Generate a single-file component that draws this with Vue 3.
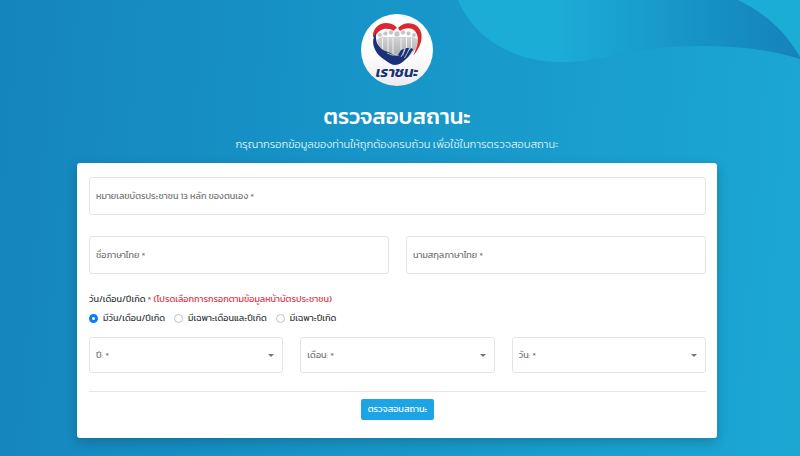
<template>
    <div class="page">
        <svg class="wave" viewBox="0 0 342 64" aria-hidden="true">
            <defs>
                <linearGradient id="wave-fill" x1="0" y1="0" x2="1" y2="0">
                    <stop offset="0.28" stop-color="#1cadd6" />
                    <stop offset="0.82" stop-color="#158cc2" />
                    <stop offset="1" stop-color="#1583bb" />
                </linearGradient>
            </defs>
            <path d="M0 0C13 32 48 62 106 62C150 62 170 46 242 46C285 46 318 51 342 59V0Z" fill="url(#wave-fill)" />
            <path d="M280 0C308 14 326 30 342 57V0Z" fill="#1cadd6" />
        </svg>

        <div class="content">
            <svg class="logo" viewBox="0 0 72 72" role="img" aria-label="เราชนะ">
                <defs>
                    <linearGradient id="logo-bg" x1="0" y1="0" x2="0" y2="1">
                        <stop offset="0.5" stop-color="#ffffff" />
                        <stop offset="1" stop-color="#ececee" />
                    </linearGradient>
                    <linearGradient id="logo-people" x1="0" y1="0" x2="0" y2="1">
                        <stop offset="0" stop-color="#d4d4d6" />
                        <stop offset="1" stop-color="#a9aaad" />
                    </linearGradient>
                </defs>
                <circle cx="36" cy="36" r="36" fill="url(#logo-bg)" />
                <path d="M16 26Q18 23 22 23H51Q55 23 57 26L55 35L47 43H27L18 35Z" fill="url(#logo-people)" />
                <g fill="#c4c4c7" stroke="#f8f8f8" stroke-width="0.6">
                    <circle cx="19" cy="21" r="2.2" />
                    <circle cx="24.500" cy="19.500" r="2.3" />
                    <circle cx="30" cy="18.500" r="2.4" />
                    <circle cx="42" cy="18.500" r="2.4" />
                    <circle cx="47.500" cy="19.500" r="2.3" />
                    <circle cx="53" cy="21" r="2.2" />
                    <circle cx="36" cy="20" r="2.9" />
                </g>
                <path d="M21.500 24V35M27 23V38M32 24V40M40 24V40M45.500 23V37M50.500 24V36" stroke="#f4f4f5" stroke-width="0.9" fill="none" />
                <path d="M12 23C11 15 18 9 25 9C31 9 35 12 36 14C34 15 33 16 33 17C27 13 18 14 14 23Z" fill="#dc2630" />
                <path d="M37 14C42 8 51 8 56 12C64 19 61 32 52 42C57 32 59 23 54 17C50 13 43 14 39 17Z" fill="#dc2630" />
                <path d="M15 19C9 27 13 38 21 44C27 48 30 51 34 51C38 51 42 48 45 45C49 42 51 39 52 35L48 36C45 40 43 43 38 42C33 42 29 38 24 37C17 34 14 27 15 19Z" fill="#183178" />
                <path d="M40 36L37 41L41 44L43 35ZM45 34L42 42L44 44L48 34ZM50 34L46 42L48 42L52 35Z" fill="#183178" />
                <path d="M43.500 36L40 43M48 36L43.500 44M51.500 37L47 44M26 39Q31 42 36 41" stroke="#f4f4f8" stroke-width="0.7" fill="none" />
                <text class="logo-text" x="36" y="63" text-anchor="middle">เราชนะ</text>
            </svg>

            <h1>ตรวจสอบสถานะ</h1>
            <p class="subtitle">กรุณากรอกข้อมูลของท่านให้ถูกต้องครบถ้วน เพื่อใช้ในการตรวจสอบสถานะ</p>

            <form class="card" @submit.prevent>
                <div class="field">
                    <label for="citizen-id">หมายเลขบัตรประชาชน 13 หลัก ของตนเอง *</label>
                    <input id="citizen-id" v-model="form.citizenId" type="text" maxlength="13">
                </div>

                <div class="row names">
                    <div class="field">
                        <label for="first-name">ชื่อภาษาไทย *</label>
                        <input id="first-name" v-model="form.firstName" type="text">
                    </div>
                    <div class="field">
                        <label for="last-name">นามสกุลภาษาไทย *</label>
                        <input id="last-name" v-model="form.lastName" type="text">
                    </div>
                </div>

                <fieldset class="birth">
                    <legend>วัน/เดือน/ปีเกิด <span class="red">* (โปรดเลือกการกรอกตามข้อมูลหน้าบัตรประชาชน)</span></legend>
                    <div class="radios">
                        <label v-for="item in birthTypes" :key="item.value">
                            <input v-model="form.birthType" type="radio" name="birth-type" :value="item.value">
                            <span>{{ item.text }}</span>
                        </label>
                    </div>
                </fieldset>

                <div class="row">
                    <div v-for="item in dateFields" :key="item.id" class="field select-field">
                        <label :for="item.id">{{ item.text }} *</label>
                        <select :id="item.id" v-model="form[item.id]">
                            <option value=""></option>
                            <option v-for="n in item.options" :key="n" :value="n">{{ n }}</option>
                        </select>
                        <svg class="arrow" viewBox="0 0 6 3" aria-hidden="true"><path d="M0 0H6L3 3Z" fill="#757575" /></svg>
                    </div>
                </div>

                <hr>
                <button type="submit">ตรวจสอบสถานะ</button>
            </form>
        </div>
    </div>
</template>

<script setup>
import { reactive } from 'vue';

const form = reactive({
    citizenId: '',
    firstName: '',
    lastName: '',
    birthType: 'full',
    year: '',
    month: '',
    day: '',
})

const birthTypes = [
    { value: 'full', text: 'มีวัน/เดือน/ปีเกิด' },
    { value: 'month', text: 'มีเฉพาะเดือนและปีเกิด' },
    { value: 'year', text: 'มีเฉพาะปีเกิด' },
]

const range = (from, count) => Array.from({ length: count }, (_, i) => from + i)

const dateFields = [
    { id: 'year', text: 'ปี:', options: range(2450, 100) },
    { id: 'month', text: 'เดือน:', options: range(1, 12) },
    { id: 'day', text: 'วัน:', options: range(1, 31) },
]
</script>

<style>
body{
    margin: 0;
}
</style>

<style scoped>
.page{
    position: relative;
    box-sizing: border-box;
    min-height: 100vh;
    padding: 14px 83px 18px 77px;
    overflow: hidden;
    background: linear-gradient(95deg, #1585bd 0%, #1797c9 50%, #1ca7d3 100%);
    font-family: "Kanit", "Prompt", "Noto Sans Thai", "Noto Sans", sans-serif;
    font-size: 9px;
    color: #343a40;
}
.wave{
    position: absolute;
    top: 0;
    right: 0;
    width: 342px;
    height: 64px;
}
.content{
    position: relative;
    display: flex;
    flex-direction: column;
    align-items: center;
}
.logo{
    width: 72px;
    height: 72px;
}
.logo-text{
    font-size: 15px;
    font-weight: 600;
    font-style: italic;
    fill: #183178;
}
h1{
    margin: 15px 0 0;
    font-size: 22px;
    line-height: 32px;
    font-weight: 500;
    color: #fff;
}
.subtitle{
    margin: 3px 0 0;
    font-size: 11px;
    line-height: 16px;
    font-weight: 300;
    color: #d5eef7;
}
.card{
    box-sizing: border-box;
    width: 100%;
    max-width: 1140px;
    margin-top: 11px;
    padding: 14px 11px 18px 12px;
    display: flex;
    flex-direction: column;
    border-radius: 3px;
    background: #fff;
    box-shadow: 0 4px 12px rgba(0, 0, 0, 0.2);
}
.field{
    flex: 1;
    min-width: 0;
    display: flex;
    align-items: center;
    box-sizing: border-box;
    min-height: 38px;
    padding: 0 6px;
    border: 1px solid #e4e4e6;
    border-radius: 3px;
    line-height: 16px;
    color: #757575;
}
.field input,
.field select{
    flex: 1;
    min-width: 0;
    padding: 0 4px;
    border: none;
    outline: none;
    background: none;
    appearance: none;
    font: inherit;
    color: #343a40;
}
.select-field{
    min-height: 36px;
}
.arrow{
    width: 6px;
    height: 3px;
    margin-right: 2px;
}
.row{
    display: flex;
    gap: 17px;
}
.names{
    margin-top: 21px;
}
.birth{
    margin: 17px 0 11px;
    padding: 0;
    border: none;
}
legend{
    padding: 0;
    line-height: 16px;
}
.red{
    color: #dc3545;
}
.radios{
    display: flex;
    gap: 9px;
    margin-top: 3px;
}
.radios label{
    display: flex;
    align-items: center;
    gap: 5px;
    line-height: 16px;
}
.radios input{
    appearance: none;
    box-sizing: border-box;
    width: 9px;
    height: 9px;
    margin: 0;
    border: 1px solid #bcc2c8;
    border-radius: 50%;
    background: #fff;
}
.radios input:checked{
    border: 3px solid #0d7bff;
}
hr{
    width: 100%;
    margin: 18px 0 7px;
    border: none;
    border-top: 1px solid #e6e6e8;
}
button{
    align-self: center;
    padding: 2px 7px;
    border: none;
    border-radius: 2px;
    background: #1ba5e4;
    font: inherit;
    line-height: 17px;
    color: #fff;
}
</style>
